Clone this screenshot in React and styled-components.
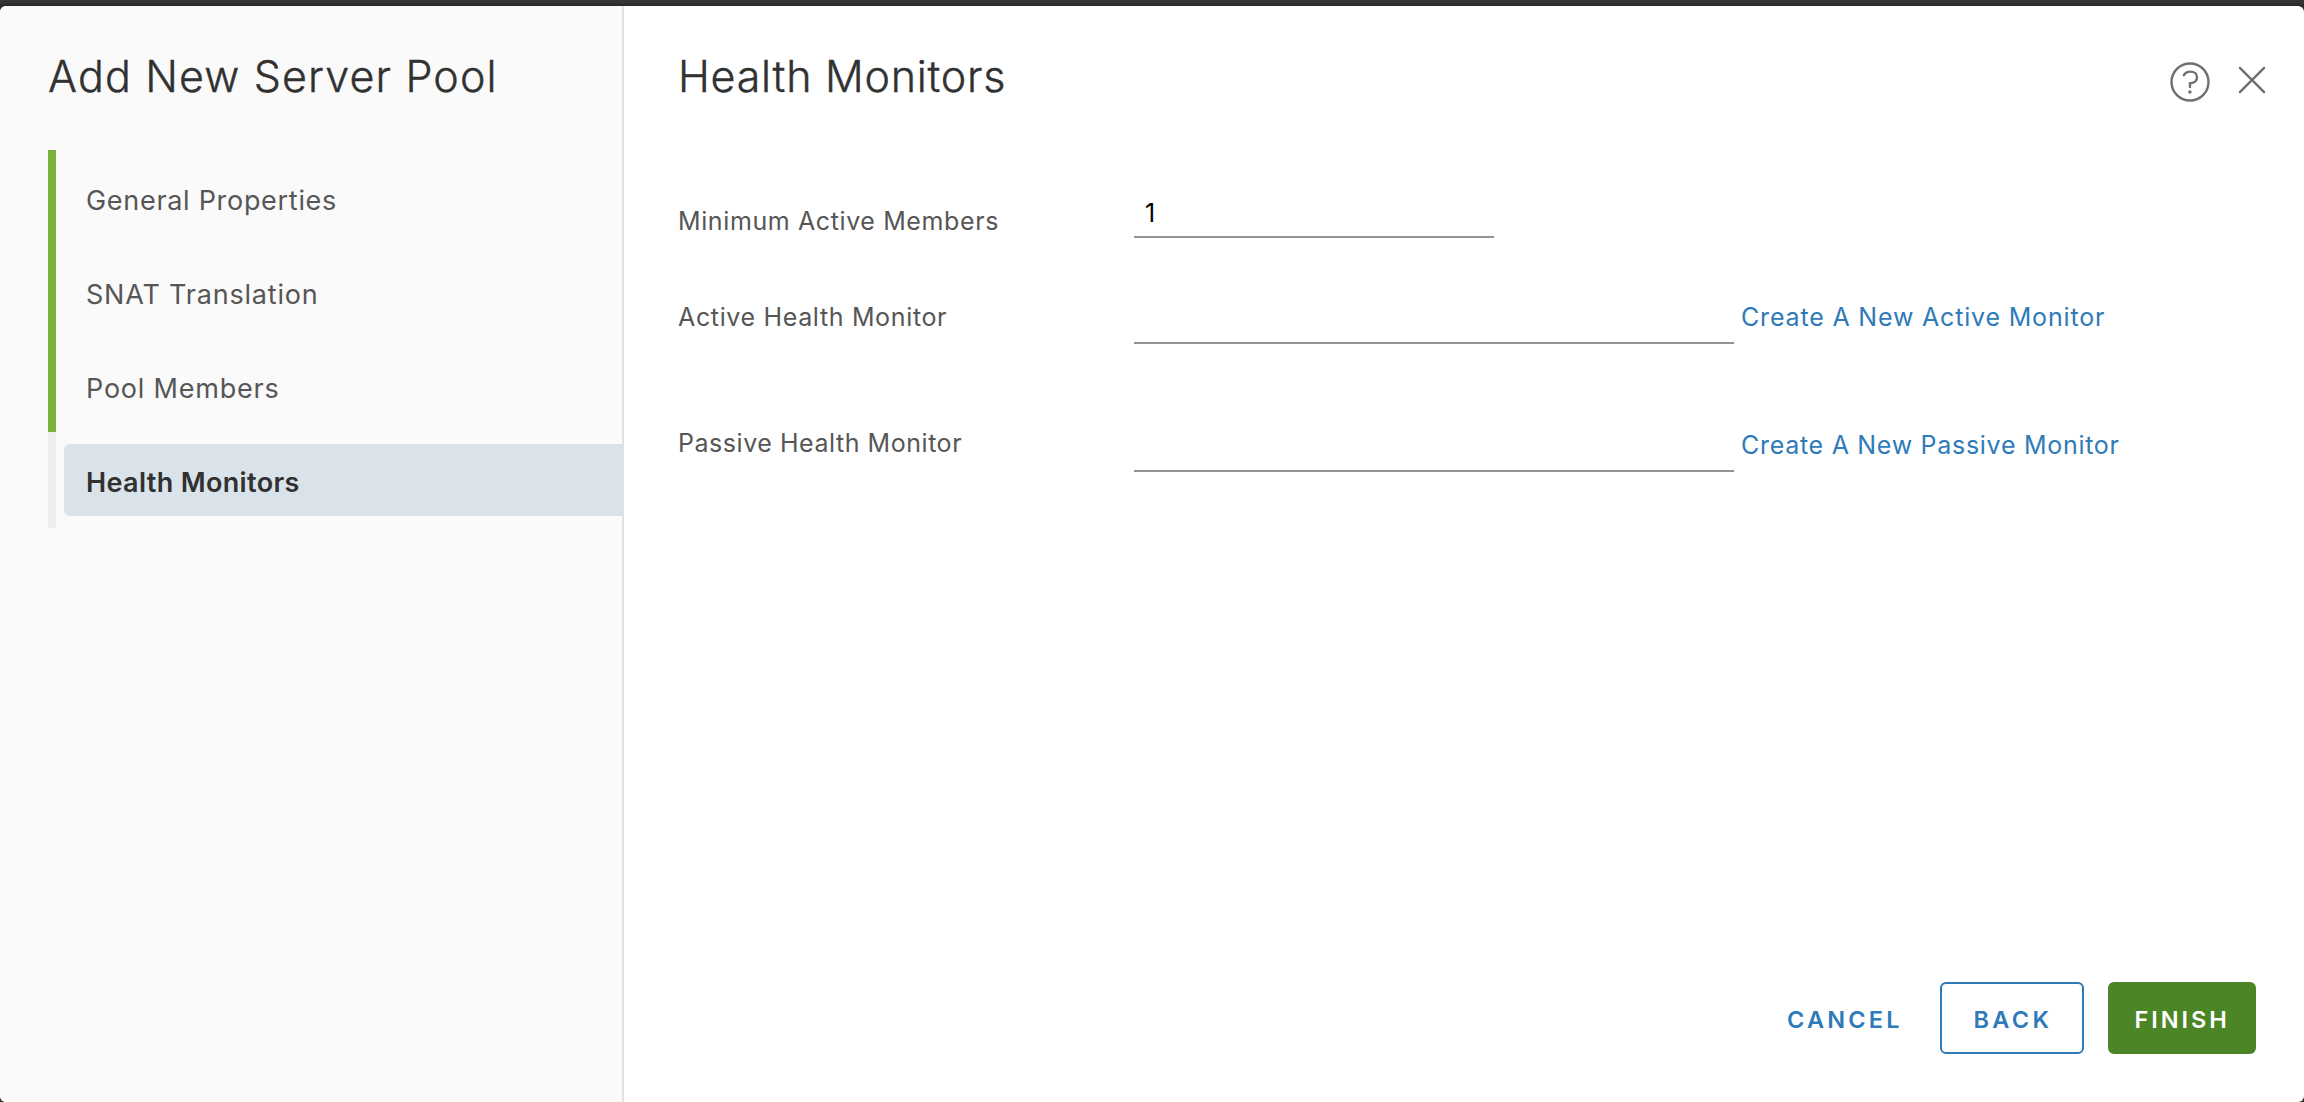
import React, { useState } from "react";
import styled, { createGlobalStyle } from "styled-components";

const GlobalStyle = createGlobalStyle`
  *, *::before, *::after { box-sizing: border-box; }
  html, body { margin: 0; padding: 0; background: #313131; }
  body { font-family: Inter, "Open Sans", sans-serif; color: #565656; overflow: hidden; }
`;

const Backdrop = styled.div`
  display: flex;
  width: 100vw;
  height: 100vh;
  padding-top: 6px;
  background: linear-gradient(#353535 0, #303132 4px, #262326 6px, #313131 7px);
`;

const Wizard = styled.div`
  flex: 1;
  display: flex;
  overflow: hidden;
  border-radius: 6px;
  background: #fff;
`;

const Sidebar = styled.aside`
  flex: 0 0 624px;
  padding: 40px 0 0 48px;
  border-right: 2px solid #e1e1e1;
  background: #fafafa;
`;

const Title = styled.h1`
  margin: 0;
  font-size: 43px;
  font-weight: 300;
  line-height: 61px;
  letter-spacing: ${(p) => p.$tracking}px;
  -webkit-text-stroke: 0.4px currentColor;
  color: #313131;
  white-space: nowrap;
`;

const Steps = styled.ul`
  display: flex;
  flex-direction: column;
  margin: 43px 0 0;
  padding: 0;
  list-style: none;
`;

const Step = styled.li`
  display: flex;
  height: ${(p) => (p.$active ? 96 : 94)}px;
  padding: ${(p) => (p.$active ? "12px 0" : "0")};
  padding-left: 8px;
  border-left: 8px solid ${(p) => (p.$done ? "#79b13c" : "#eeeeee")};
`;

const StepLabel = styled.button`
  flex: 1;
  display: flex;
  align-items: center;
  padding: ${(p) => (p.$active ? 4 : 6)}px 0 0 22px;
  border: 0;
  border-radius: 6px 0 0 6px;
  background: ${(p) => (p.$active ? "#dbe3ea" : "transparent")};
  color: ${(p) => (p.$active ? "#313131" : "#565656")};
  font-family: inherit;
  font-size: 27px;
  font-weight: ${(p) => (p.$active ? 600 : 400)};
  letter-spacing: ${(p) => p.$tracking}px;
`;

const Panel = styled.main`
  flex: 1;
  display: flex;
  flex-direction: column;
  padding: 40px 48px 48px 54px;
`;

const Header = styled.header`
  display: flex;
  justify-content: space-between;
  align-items: flex-start;
  margin-right: -12px;
`;

const Actions = styled.div`
  display: flex;
  gap: 24px;
  padding-top: 16px;
`;

const IconButton = styled.button`
  display: flex;
  padding: 0;
  border: 0;
  background: none;
  color: #6f6f6f;

  svg {
    display: block;
    fill: none;
    stroke: currentColor;
    stroke-width: 2.4;
    stroke-linecap: round;
  }
`;

const Form = styled.form`
  flex: 1;
  display: flex;
  flex-direction: column;
  padding-top: 89px;
`;

const Row = styled.div`
  display: grid;
  grid-template-columns: 456px auto 1fr;
  height: ${(p) => p.$height}px;
  margin-bottom: ${(p) => p.$after || 0}px;
`;

const Label = styled.label`
  font-size: 25px;
  line-height: 50px;
  letter-spacing: ${(p) => p.$tracking}px;
  white-space: nowrap;
`;

const Field = styled.input`
  width: ${(p) => p.$width}px;
  height: ${(p) => p.$height}px;
  padding: 0 0 6px 11px;
  border: 0;
  border-bottom: 2px solid #949494;
  border-radius: 0;
  outline: 0;
  background: transparent;
  color: #000;
  font-family: inherit;
  font-size: 25px;
`;

const CreateLink = styled.a`
  margin-left: 7px;
  color: #2f7ab8;
  font-size: 25px;
  line-height: ${(p) => p.$line}px;
  letter-spacing: ${(p) => p.$tracking}px;
  text-decoration: none;
  white-space: nowrap;
`;

const Footer = styled.footer`
  display: flex;
  justify-content: flex-end;
  gap: 24px;
`;

const Button = styled.button`
  width: ${(p) => p.$width}px;
  height: 72px;
  padding: 2px 0 0 ${(p) => p.$inset}px;
  border: 2px solid ${(p) => p.$border || "transparent"};
  border-radius: 6px;
  background: ${(p) => p.$fill || "transparent"};
  color: ${(p) => (p.$fill ? "#fff" : "#2f7ab8")};
  font-family: inherit;
  font-size: 23.5px;
  font-weight: 600;
  letter-spacing: ${(p) => p.$tracking}px;
  text-align: left;
`;

const HelpIcon = () => (
  <svg width="40" height="40" viewBox="0 0 40 40">
    <circle cx="20" cy="20" r="18.5" />
    <path d="M13.8 13.2C15.3 10.7 17.6 9.6 20.3 9.6C24.4 9.6 27 11.8 27 15.2C27 18.5 24.4 20.9 20 21.3V25" />
    <circle cx="19.9" cy="30" r="1.7" fill="currentColor" stroke="none" />
  </svg>
);

const CloseIcon = () => (
  <svg width="34" height="40" viewBox="0 0 34 40">
    <path d="M5.9 5.9L30.1 30.1M30.1 5.9L5.9 30.1" />
  </svg>
);

const steps = [
  { name: "General Properties", tracking: 0.7, done: true },
  { name: "SNAT Translation", tracking: 0.8, done: true },
  { name: "Pool Members", tracking: 0.78, done: true },
  { name: "Health Monitors", tracking: 0.35, active: true },
];

export default function App() {
  const [minimum, setMinimum] = useState("1");
  return (
    <>
      <GlobalStyle />
      <Backdrop>
        <Wizard>
          <Sidebar>
            <Title $tracking={1.14}>Add New Server Pool</Title>
            <Steps>
              {steps.map((s) => (
                <Step key={s.name} $done={s.done} $active={s.active}>
                  <StepLabel $active={s.active} $tracking={s.tracking}>
                    {s.name}
                  </StepLabel>
                </Step>
              ))}
            </Steps>
          </Sidebar>
          <Panel>
            <Header>
              <Title as="h2" $tracking={0.74}>Health Monitors</Title>
              <Actions>
                <IconButton aria-label="Help"><HelpIcon /></IconButton>
                <IconButton aria-label="Close"><CloseIcon /></IconButton>
              </Actions>
            </Header>
            <Form>
              <Row $height={50} $after={46}>
                <Label htmlFor="minimum" $tracking={0.61}>Minimum Active Members</Label>
                <Field
                  id="minimum"
                  $width={360}
                  $height={42}
                  value={minimum}
                  onChange={(e) => setMinimum(e.target.value)}
                />
              </Row>
              <Row $height={52} $after={74}>
                <Label htmlFor="active" $tracking={0.65}>Active Health Monitor</Label>
                <Field id="active" $width={600} $height={52} />
                <CreateLink $line={50} $tracking={0.82}>Create A New Active Monitor</CreateLink>
              </Row>
              <Row $height={54}>
                <Label htmlFor="passive" $tracking={0.54}>Passive Health Monitor</Label>
                <Field id="passive" $width={600} $height={54} />
                <CreateLink $line={54} $tracking={0.71}>Create A New Passive Monitor</CreateLink>
              </Row>
            </Form>
            <Footer>
              <Button $width={155} $inset={24} $tracking={3.2}>CANCEL</Button>
              <Button $width={144} $inset={31.5} $tracking={3.35} $border="#2f7ab8">BACK</Button>
              <Button $width={148} $inset={24.5} $tracking={2.95} $border="#4b8526" $fill="#4b8526">
                FINISH
              </Button>
            </Footer>
          </Panel>
        </Wizard>
      </Backdrop>
    </>
  );
}
